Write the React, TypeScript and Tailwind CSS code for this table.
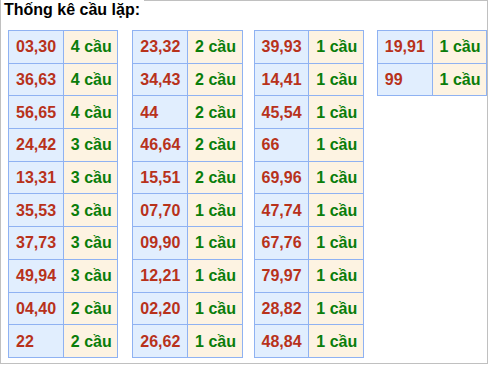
import React from 'react';

type Row = [string, string];

const tables: { rows: Row[]; ml: string }[] = [
  {
    ml: 'ml-[7px]',
    rows: [
      ['03,30', '4 cầu'],
      ['36,63', '4 cầu'],
      ['56,65', '4 cầu'],
      ['24,42', '3 cầu'],
      ['13,31', '3 cầu'],
      ['35,53', '3 cầu'],
      ['37,73', '3 cầu'],
      ['49,94', '3 cầu'],
      ['04,40', '2 cầu'],
      ['22', '2 cầu'],
    ],
  },
  {
    ml: 'ml-[14px]',
    rows: [
      ['23,32', '2 cầu'],
      ['34,43', '2 cầu'],
      ['44', '2 cầu'],
      ['46,64', '2 cầu'],
      ['15,51', '2 cầu'],
      ['07,70', '1 cầu'],
      ['09,90', '1 cầu'],
      ['12,21', '1 cầu'],
      ['02,20', '1 cầu'],
      ['26,62', '1 cầu'],
    ],
  },
  {
    ml: 'ml-[11px]',
    rows: [
      ['39,93', '1 cầu'],
      ['14,41', '1 cầu'],
      ['45,54', '1 cầu'],
      ['66', '1 cầu'],
      ['69,96', '1 cầu'],
      ['47,74', '1 cầu'],
      ['67,76', '1 cầu'],
      ['79,97', '1 cầu'],
      ['28,82', '1 cầu'],
      ['48,84', '1 cầu'],
    ],
  },
  {
    ml: 'ml-[13px]',
    rows: [
      ['19,91', '1 cầu'],
      ['99', '1 cầu'],
    ],
  },
];

export default function App() {
  return (
    <div className="w-[488px] h-[364px] border border-[#c0c0c0] bg-white font-['Liberation_Sans',Arial,sans-serif]">
      {/* title covers the top border */}
      <div className="relative -mt-px pl-[3px] pr-[4px] w-fit bg-white text-[16px] leading-[19px] font-bold text-black">
        Thống kê cầu lặp:
      </div>

      <div className="flex items-start mt-[11px]">
        {tables.map((t, i) => (
          <table key={i} className={`${t.ml} border-collapse text-[16px] font-bold`}>
            <tbody>
              {t.rows.map(([num, count], j) => (
                <tr key={j} className="h-[32.7px]">
                  <td className="w-[55px] border border-[#8fb2f2] bg-[#e1eefe] pl-[7px] p-0 pt-px text-[#b8321b]">
                    {num}
                  </td>
                  <td className="w-[55px] border border-[#8fb2f2] bg-[#fdf3e2] pl-[7px] p-0 pt-px text-[#0a7d0a]">
                    {count}
                  </td>
                </tr>
              ))}
            </tbody>
          </table>
        ))}
      </div>
    </div>
  );
}
